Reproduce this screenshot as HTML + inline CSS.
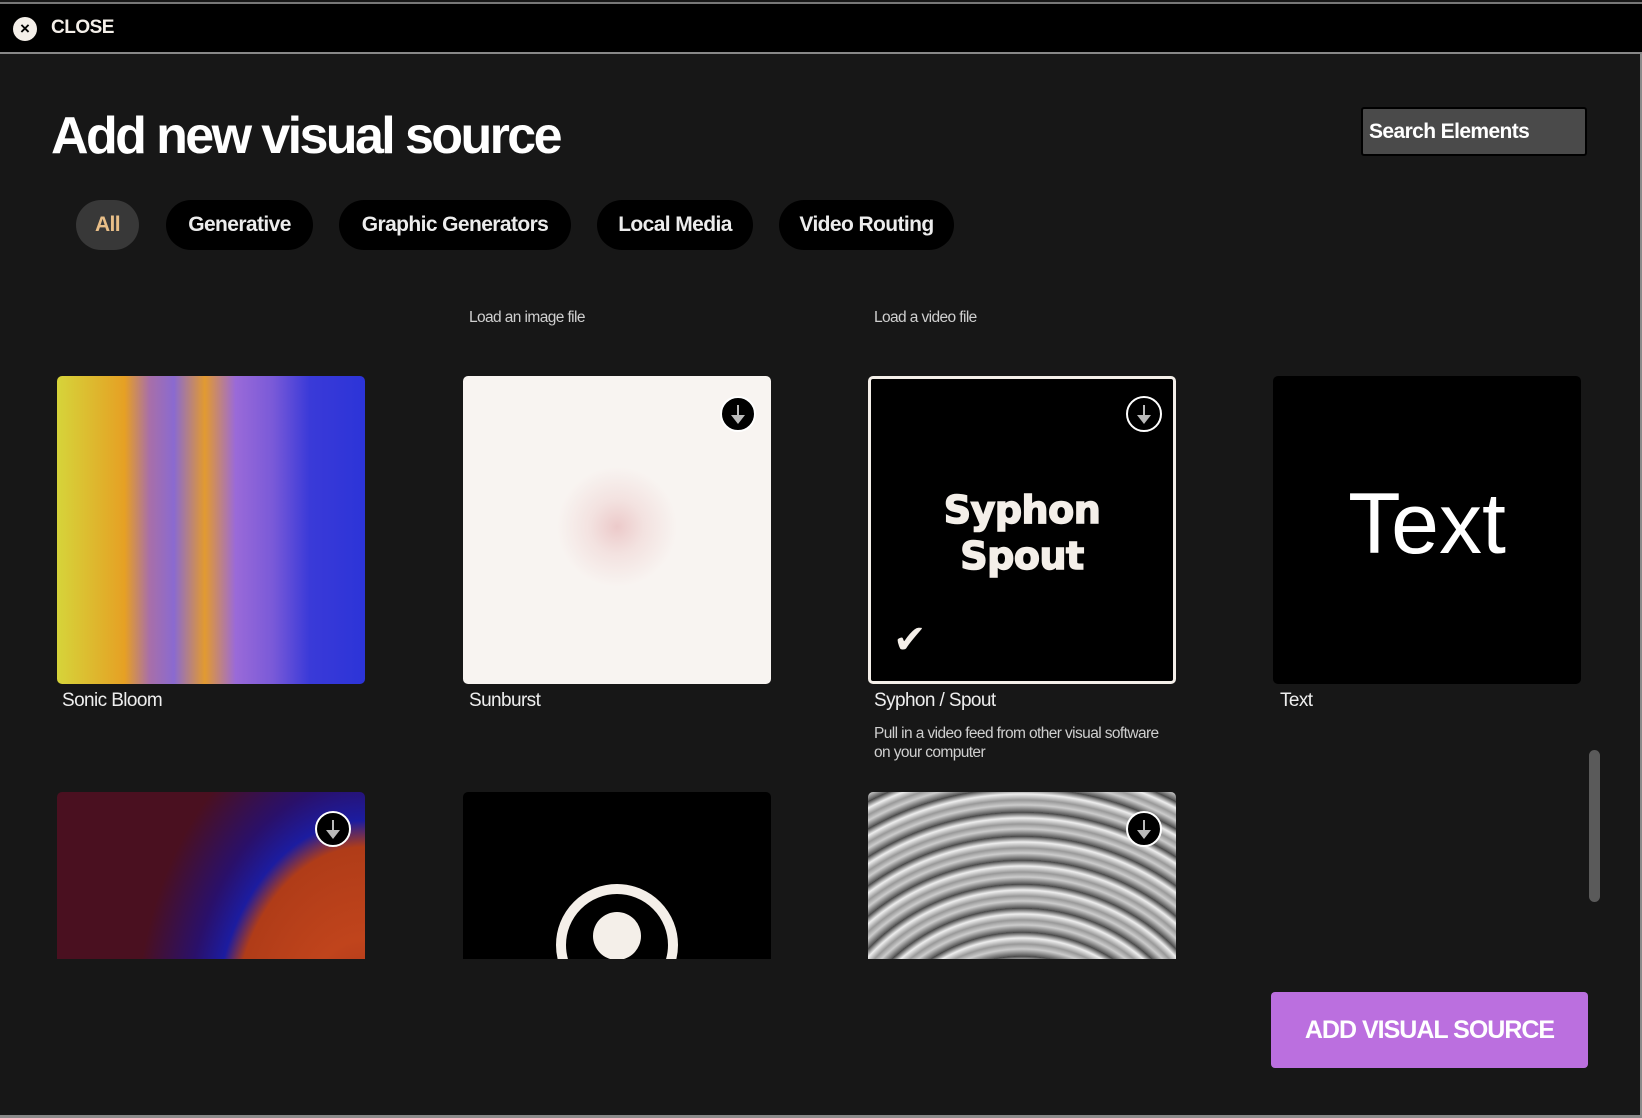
<!DOCTYPE html>
<html><head><meta charset="utf-8"><style>
*{margin:0;padding:0;box-sizing:border-box}
body{width:1642px;height:1118px;background:#171717;overflow:hidden;position:relative;font-family:"Liberation Sans",sans-serif;color:#f4efe9}
.abs{position:absolute}
.top{left:0;top:2px;width:1642px;height:52px;background:#000;border-top:2px solid #777;border-bottom:2px solid #888}
.pill{position:absolute;top:200px;height:50px;border-radius:25px;background:#000;font-weight:bold;font-size:21px;line-height:50px;text-align:center;letter-spacing:-0.6px;color:#ececec}
.card{position:absolute;width:308px;height:308px;border-radius:5px;overflow:hidden}
.lbl{position:absolute;font-size:19px;letter-spacing:-0.6px;color:#eee}
.desc{position:absolute;font-size:15.5px;letter-spacing:-0.6px;color:#cfcfcf;line-height:19px}
.dl{position:absolute;width:36px;height:36px;border-radius:50%;background:#000;border:2px solid #fff}
.dl:before{content:"";position:absolute;left:15px;top:7px;width:2px;height:12px;background:#bbb}
.dl:after{content:"";position:absolute;left:9px;top:17px;border-left:7px solid transparent;border-right:7px solid transparent;border-top:9px solid #bbb}
</style></head><body>
<div class="abs top"></div>
<div class="abs" style="left:13px;top:17px;width:24px;height:24px;border-radius:50%;background:#f4efe9;color:#000;font-weight:bold;font-size:17px;line-height:24px;text-align:center">×</div>
<div class="abs" style="left:51px;top:17px;font-weight:bold;font-size:19px;letter-spacing:-0.5px">CLOSE</div>
<div class="abs" style="left:1640px;top:54px;width:2px;height:1064px;background:#8a8a8a"></div>
<div class="abs" style="left:0;top:1115px;width:1642px;height:3px;background:#8a8a8a"></div>

<div class="abs" style="left:51px;top:106px;font-weight:bold;font-size:52px;letter-spacing:-2.6px;color:#fff">Add new visual source</div>
<div class="abs" style="left:1361px;top:107px;width:226px;height:49px;background:#4a4a4a;border:2px solid #000;border-radius:3px;font-weight:bold;font-size:21px;line-height:45px;padding-left:6px;letter-spacing:-0.6px;color:#fff">Search Elements</div>

<div class="pill" style="left:76px;width:63px;background:#383838;color:#e9bf88">All</div>
<div class="pill" style="left:166px;width:147px">Generative</div>
<div class="pill" style="left:339px;width:232px">Graphic Generators</div>
<div class="pill" style="left:597px;width:156px">Local Media</div>
<div class="pill" style="left:779px;width:175px">Video Routing</div>

<div class="abs" style="left:0;top:262px;width:1590px;height:697px;overflow:hidden">
 <div class="desc" style="left:469px;top:46px">Load an image file</div>
 <div class="desc" style="left:874px;top:46px">Load a video file</div>

 <div class="card" style="left:57px;top:114px;background:linear-gradient(90deg,#d6d43a 0%,#dfb32c 14%,#e6a024 22%,#a86fa8 30%,#8a6ad0 38%,#e29a30 48%,#9a6ad8 58%,#7a5ad8 70%,#3a3ad8 82%,#2c34d8 100%)"></div>
 <div class="lbl" style="left:62px;top:428px">Sonic Bloom</div>

 <div class="card" style="left:463px;top:114px;background:radial-gradient(ellipse 60px 60px at 50% 49%,#eccaca 0%,#f3e2e0 45%,#f8f4f1 100%)"></div>
 <div class="dl" style="left:720px;top:134px"></div>
 <div class="lbl" style="left:469px;top:428px">Sunburst</div>

 <div class="card" style="left:868px;top:114px;background:#000;border:3px solid #f4efe9;border-radius:5px">
  <div style="position:absolute;left:0;width:100%;top:108px;text-align:center;font-family:'DejaVu Sans',sans-serif;font-weight:bold;font-size:38px;line-height:46px;color:#f4efe9;letter-spacing:-0.5px;-webkit-text-stroke:1.5px #f4efe9">Syphon<br>Spout</div>
  <div style="position:absolute;left:22px;top:238px;font-size:40px;color:#f4efe9;font-family:'DejaVu Sans',sans-serif;font-weight:bold">✔</div>
 </div>
 <div class="dl" style="left:1126px;top:134px"></div>
 <div class="lbl" style="left:874px;top:428px">Syphon / Spout</div>
 <div class="desc" style="left:874px;top:462px">Pull in a video feed from other visual software<br>on your computer</div>

 <div class="card" style="left:1273px;top:114px;background:#000">
  <div style="position:absolute;left:0;width:100%;top:103px;text-align:center;font-size:86px;color:#fff;line-height:90px">Text</div>
 </div>
 <div class="lbl" style="left:1280px;top:428px">Text</div>

 <div class="card" style="left:57px;top:530px;background:radial-gradient(ellipse 60px 120px at 55% 100%,#c8441c 0%,#a8351a 60%,#1a1ca8 85%,transparent 100%),radial-gradient(ellipse 230px 330px at 100% 80%,#a03018 0%,#c0441c 30%,#b03c18 58%,#1c1ca0 66%,#2a106a 78%,#4a1020 100%)"></div>
 <div class="dl" style="left:315px;top:549px"></div>
 <div class="card" style="left:463px;top:530px;background:#000">
  <div style="position:absolute;left:93px;top:92px;width:122px;height:122px;border-radius:50%;border:10px solid #f4efe9"></div>
  <div style="position:absolute;left:130px;top:120px;width:48px;height:48px;border-radius:50%;background:#f4efe9"></div>
 </div>
 <div class="card" style="left:868px;top:530px;background:repeating-radial-gradient(circle at 50% 100%,#555 0,#ccc 7px,#999 12px,#eee 18px,#444 24px)"></div>
 <div class="dl" style="left:1126px;top:549px"></div>
</div>

<div class="abs" style="left:1589px;top:750px;width:11px;height:152px;border-radius:6px;background:#5a5a5a"></div>
<div class="abs" style="left:1271px;top:992px;width:317px;height:76px;border-radius:4px;background:#bb6fdf;font-weight:bold;font-size:25px;line-height:76px;text-align:center;color:#fff;letter-spacing:-1px">ADD VISUAL SOURCE</div>
</body></html>
